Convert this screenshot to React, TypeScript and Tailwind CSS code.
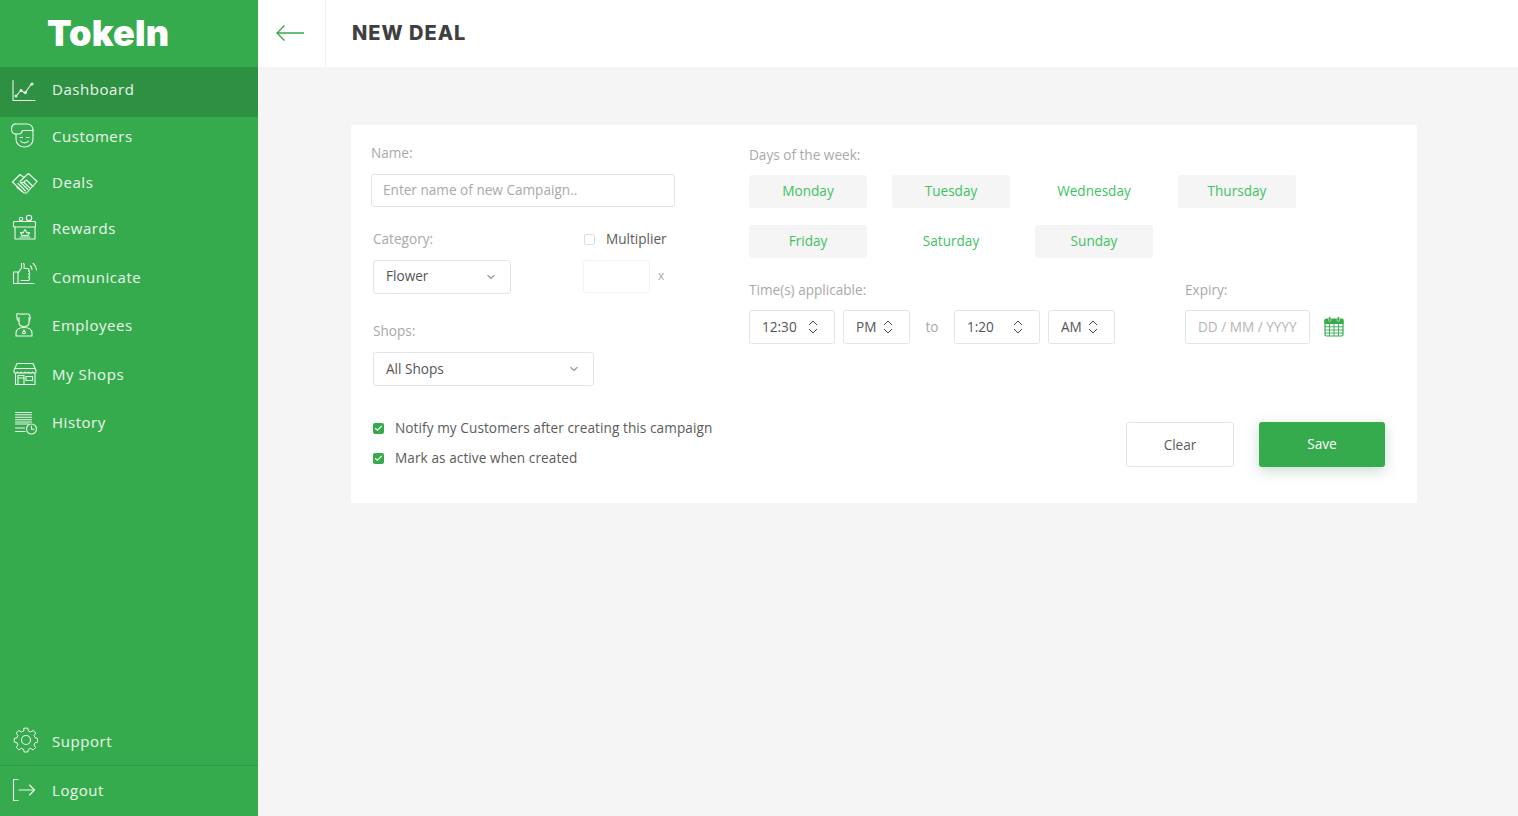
import { ChevronDown, ChevronsUpDown, Check } from "lucide-react";
import type { ReactNode } from "react";

const Icon = ({ children }: { children: ReactNode }) => (
  <svg viewBox="0 0 28 28" className="w-7 h-7 shrink-0 text-white/90" fill="none" stroke="currentColor" strokeWidth="1.1" strokeLinecap="round" strokeLinejoin="round">
    {children}
  </svg>
);

const icons = {
  dashboard: (
    <Icon>
      <path d="M3 4.5V24.5H25" />
      <path d="M6.5 19.5L11 14.5L15 17L21 8.5" />
      <circle cx="6" cy="20" r="1" /><circle cx="11" cy="14.5" r="1" /><circle cx="15.5" cy="16.5" r="1" /><circle cx="22" cy="8" r="1" />
    </Icon>
  ),
  customers: (
    <Icon>
      <path d="M6 12C3 12 1.5 10 1.5 7C1.5 3.5 3.5 1.5 7 2H17C21 2 23 5 23 9V17C23 22 19 25 14.5 25C10 25 6 22 6 17Z" />
      <path d="M6 12H9C11 12 12 10 12.5 8.5H23" />
      <path d="M10 15.5H12.5M16.5 15.5H19M10.5 19C12.5 21.5 16.5 21.5 18.5 19" />
    </Icon>
  ),
  deals: (
    <Icon>
      <path d="M2.5 14L10 6.5L14 9.5L18.5 5.5L27 13.5L16.5 25L14 25L2.5 14Z" />
      <path d="M14 9.5L10 13.5C11 15 13 15 14.5 13.5L16.5 12L23 18.5" />
      <path d="M8 15.5L15.5 23M10.5 14.5L18 21.5M14 14.5L20.5 20.5M7 19.5L12 23.5" />
    </Icon>
  ),
  rewards: (
    <Icon>
      <rect x="3.5" y="7.5" width="22" height="5.5" rx="1" />
      <path d="M5 13V25H25V13" />
      <circle cx="19" cy="4" r="2.7" /><circle cx="11" cy="5" r="1.7" />
      <path d="M15 15.5L17 19L19.5 18.5L18 21.5H12L10.5 18.5L13 19ZM10 23H20" />
    </Icon>
  ),
  comunicate: (
    <Icon>
      <g transform="translate(0 -3)">
        <path d="M3.5 12H8V23.5H3.5Z" />
        <path d="M8 13L11.5 8V2C14 2 14.5 4.5 14 8.5H17.5C19 8.5 19.5 10 18.5 11C20 11.5 20 13.5 18.5 14C20 14.5 20 16.5 18.5 17C20 18 19.5 20 18.5 20.5H11M8 23.5H24" />
        <path d="M20.5 6C21.5 7 22 8 22 9.5M23 3C25 5 26.5 7 26.5 10" />
      </g>
    </Icon>
  ),
  employees: (
    <Icon>
      <path d="M9 10.5C7 9 6.5 6 7 2.5C10 3.5 15 3 18.5 3C20 4 20.5 7 19.5 10" />
      <path d="M9 6.5V11.5C9 14 11 15.5 14 15.5C17 15.5 19 14 19 11.5V6.5" />
      <path d="M6 25V22.5C6 18.5 9.5 16.5 14 16.5C18.5 16.5 22 18.5 22 22.5V25Z" />
      <path d="M14 19L12.5 21.5C12.5 23 15.5 23 15.5 21.5Z" />
    </Icon>
  ),
  shops: (
    <Icon>
      <path d="M7 3.5H23L26 10.5V12C26 13.5 23 13.5 22.5 12C22 13.5 19 13.5 18.5 12C18 13.5 15.5 13.5 15 12C14.5 13.5 11.5 13.5 11 12C10.5 13.5 8 13.5 7.5 12C7 13.5 4 13.5 4 12V10.5Z" />
      <path d="M5 8.5H25" />
      <path d="M5.5 14V24.5H25V14M8 24V15.5H14V24M16 16.5H22.5V20.5H16ZM8 18H14" />
    </Icon>
  ),
  history: (
    <Icon>
      <path d="M5.5 4.5H21.5M5.5 6.8H21.5M5.5 9.2H21.5M5.5 11.8H21.5M5.5 16H19M5.5 20H14.5M5.5 23.5H15M5.5 14H21.5" />
      <circle cx="21.5" cy="21" r="5" />
      <path d="M21.5 18V21.3H24" />
    </Icon>
  ),
  support: (
    <Icon>
      <path d="M12 2.5H16L16.8 5.8L19.2 6.8L22 5L24.8 7.9L23 10.7L24 13.1L27 14V18L23.9 18.8L22.9 21.2L24.6 24L21.8 26.7L19 25L16.7 26L16 29H12L11.2 26L8.8 25L6 26.7L3.2 24L5 21.2L4 18.8L1 18V14L4 13.1L5 10.7L3.2 7.9L6 5L8.8 6.8L11.2 5.8Z" transform="translate(3.4 -1.1) scale(0.9)" />
      <circle cx="16" cy="13" r="4.5" />
    </Icon>
  ),
  logout: (
    <Icon>
      <path d="M8 3.5H3.5V24.5H8" />
      <path d="M9 14H24.5M19.5 9L24.5 14L19.5 19" />
    </Icon>
  ),
};

type NavItem = { label: string; icon: ReactNode; cls: string };
const nav: NavItem[] = [
  { label: "Customers", icon: icons.customers, cls: "mt-[7px]" },
  { label: "Deals", icon: icons.deals, cls: "mt-[22px]" },
  { label: "Rewards", icon: icons.rewards, cls: "mt-[22px]" },
  { label: "Comunicate", icon: icons.comunicate, cls: "mt-[25px]" },
  { label: "Employees", icon: icons.employees, cls: "mt-6" },
  { label: "My Shops", icon: icons.shops, cls: "mt-[25px]" },
  { label: "History", icon: icons.history, cls: "mt-6" },
];

const Row = ({ label, icon, cls }: NavItem) => (
  <div className={`flex items-center h-6 pl-[10px] gap-[14px] text-[15px] tracking-[0.55px] text-white/90 ${cls}`}>
    {icon}
    <span>{label}</span>
  </div>
);

const Label = ({ children }: { children: ReactNode }) => (
  <div className="h-5 leading-5 text-[13.6px] text-[#a9a9a9]">{children}</div>
);

const boxCls = "flex items-center h-[34px] border border-[#e4e4e4] rounded-[3px] text-[13.6px] text-[#555]";

const Spin = ({ text, w }: { text: string; w: string }) => (
  <div className={`${boxCls} ${w} pl-[12px] pr-[12px] justify-between`}>
    <span>{text}</span>
    <ChevronsUpDown size={18} strokeWidth={1.3} className="text-[#444]" />
  </div>
);

const Day = ({ name, on }: { name: string; on?: boolean }) => (
  <div className={`h-[33px] w-[118px] pb-px flex items-center justify-center rounded-[3px] text-[13.6px] text-[#3fc35f] ${on ? "bg-[#f5f5f5]" : ""}`}>{name}</div>
);

const Tick = ({ text }: { text: string }) => (
  <div className="flex items-center h-5 gap-[11px] text-[13.6px] tracking-[0.08px] text-[#5b5b5b]">
    <span className="w-[11px] h-[11px] rounded-[2px] bg-[#36ab4d] flex items-center justify-center">
      <Check size={9} strokeWidth={3} className="text-white" />
    </span>
    {text}
  </div>
);

export default function App() {
  return (
    <div className="flex h-[816px] w-full overflow-hidden bg-[#f5f5f5] font-['Open_Sans',sans-serif]">
      <aside className="w-[258px] shrink-0 flex flex-col bg-[#36ab4d]">
        <div className="h-[67px] pl-[47px] pb-[2px] flex items-center text-[36px] font-black text-white font-['Inter',sans-serif] tracking-[0.2px]">TokeIn</div>
        <div className="h-[50px] pb-[5px] bg-[#2e9142] flex items-center">
          <Row label="Dashboard" icon={icons.dashboard} cls="" />
        </div>
        {nav.map((n) => <Row key={n.label} {...n} />)}
        <div className="mt-auto">
          <Row label="Support" icon={icons.support} cls="" />
          <div className="mt-[12px] border-t border-[#2f9a45]" />
          <div className="h-[50px] pb-[2px] flex items-center">
            <Row label="Logout" icon={icons.logout} cls="" />
          </div>
        </div>
      </aside>
      <main className="flex-1 min-w-0 flex flex-col">
        <header className="h-[67px] bg-white flex items-stretch shrink-0">
          <div className="w-[68px] pl-[17px] pb-[2px] border-r border-[#f3f3f3] flex items-center">
            <svg width="30" height="18" viewBox="0 0 30 18" fill="none" stroke="#36ab4d" strokeWidth="1.4">
              <path d="M29 9H2M9.5 1.5L2 9L9.5 16.5" />
            </svg>
          </div>
          <div className="pl-[26px] pb-[2px] flex items-center text-xl font-extrabold text-[#3f3f3f] font-['Inter',sans-serif] tracking-[1px]">NEW DEAL</div>
        </header>
        <section className="ml-[93px] mt-[58px] w-[1066px] h-[378px] bg-white rounded-[3px] pt-[18px] pl-5 pr-8">
          <div className="flex h-[243px]">
            <div className="w-[378px] shrink-0">
              <Label>Name:</Label>
              <input placeholder="Enter name of new Campaign.." className="mt-[11px] block w-[304px] h-[33px] px-[11px] pb-[2px] border border-[#e4e4e4] rounded-[3px] text-[13.6px] outline-none placeholder:text-[#a9a9a9]" />
              <div className="ml-0.5 mt-[22px] flex gap-[72px]">
                <div>
                  <Label>Category:</Label>
                  <div className={`${boxCls} mt-[11px] w-[138px] pl-3 pr-[13px] justify-between`}>
                    <span className="pb-px">Flower</span>
                    <ChevronDown size={12} strokeWidth={2} className="text-[#444]" />
                  </div>
                </div>
                <div>
                  <div className="flex items-center h-5 gap-[11px] text-[13.6px] text-[#5b5b5b]">
                    <span className="ml-px w-[11px] h-[11px] border border-[#dedede] rounded-[2px]" />
                    Multiplier
                  </div>
                  <div className="mt-[11px] flex items-center gap-[8px]">
                    <div className="w-[67px] h-[33px] border border-[#f3f3f3] rounded-[3px]" />
                    <span className="text-xs text-[#a9a9a9] pb-[2px]">x</span>
                  </div>
                </div>
              </div>
              <div className="ml-0.5 mt-[27px]">
                <Label>Shops:</Label>
                <div className={`${boxCls} mt-[11px] w-[221px] pl-3 pr-[13px] justify-between`}>
                  <span>All Shops</span>
                  <ChevronDown size={12} strokeWidth={2} className="text-[#444]" />
                </div>
              </div>
            </div>
            <div className="pt-0.5">
              <Label>Days of the week:</Label>
              <div className="mt-[10px] grid grid-cols-[118px_118px_118px_118px] gap-x-[25px] gap-y-[17px]">
                <Day name="Monday" on />
                <Day name="Tuesday" on />
                <Day name="Wednesday" />
                <Day name="Thursday" on />
                <Day name="Friday" on />
                <Day name="Saturday" />
                <Day name="Sunday" on />
              </div>
              <div className="mt-[22px] flex">
                <div className="w-[436px]">
                  <Label>Time(s) applicable:</Label>
                  <div className="mt-[10px] flex items-center">
                    <Spin text="12:30" w="w-[86px]" />
                    <div className="ml-2"><Spin text="PM" w="w-[67px]" /></div>
                    <span className="w-[44px] text-center text-[13.6px] text-[#a9a9a9]">to</span>
                    <Spin text="1:20" w="w-[86px]" />
                    <div className="ml-2"><Spin text="AM" w="w-[67px]" /></div>
                  </div>
                </div>
                <div>
                  <Label>Expiry:</Label>
                  <div className="mt-[10px] flex items-center gap-[14px]">
                    <input placeholder="DD / MM / YYYY" className="w-[125px] h-[34px] px-[12px] pb-px border border-[#e4e4e4] rounded-[3px] text-[13.6px] outline-none placeholder:text-[#b5b5b5]" />
                    <svg width="20" height="21" viewBox="0 0 20 21" fill="none" stroke="#36ab4d" className="-mt-px">
                      <rect x="1" y="3" width="18" height="17" rx="1.5" strokeWidth="1.2" />
                      <path d="M1 3.5H19V7.5H1Z" fill="#36ab4d" />
                      <rect x="4.5" y="0.8" width="2.4" height="4.5" rx="1" fill="#36ab4d" stroke="#fff" strokeWidth="0.5" />
                      <rect x="13.1" y="0.8" width="2.4" height="4.5" rx="1" fill="#36ab4d" stroke="#fff" strokeWidth="0.5" />
                      <path d="M1 10.8H19M1 14H19M1 17H19M5.5 7V20M10 7V20M14.5 7V20" strokeWidth="0.9" />
                    </svg>
                  </div>
                </div>
              </div>
            </div>
          </div>
          <div className="ml-0.5 mt-[32px] flex justify-between">
            <div className="flex flex-col gap-[10px]">
              <Tick text="Notify my Customers after creating this campaign" />
              <Tick text="Mark as active when created" />
            </div>
            <div className="mt-1 flex gap-[25px]">
              <div className="w-[108px] h-[45px] pt-px flex items-center justify-center border border-[#e4e4e4] rounded-[3px] text-[13.6px] text-[#5b5b5b]">Clear</div>
              <div className="w-[126px] h-[45px] flex items-center justify-center rounded-[3px] bg-[#36ab4d] text-[13.6px] text-white shadow-[0_4px_14px_rgba(40,120,70,0.25)]">Save</div>
            </div>
          </div>
        </section>
      </main>
    </div>
  );
}
